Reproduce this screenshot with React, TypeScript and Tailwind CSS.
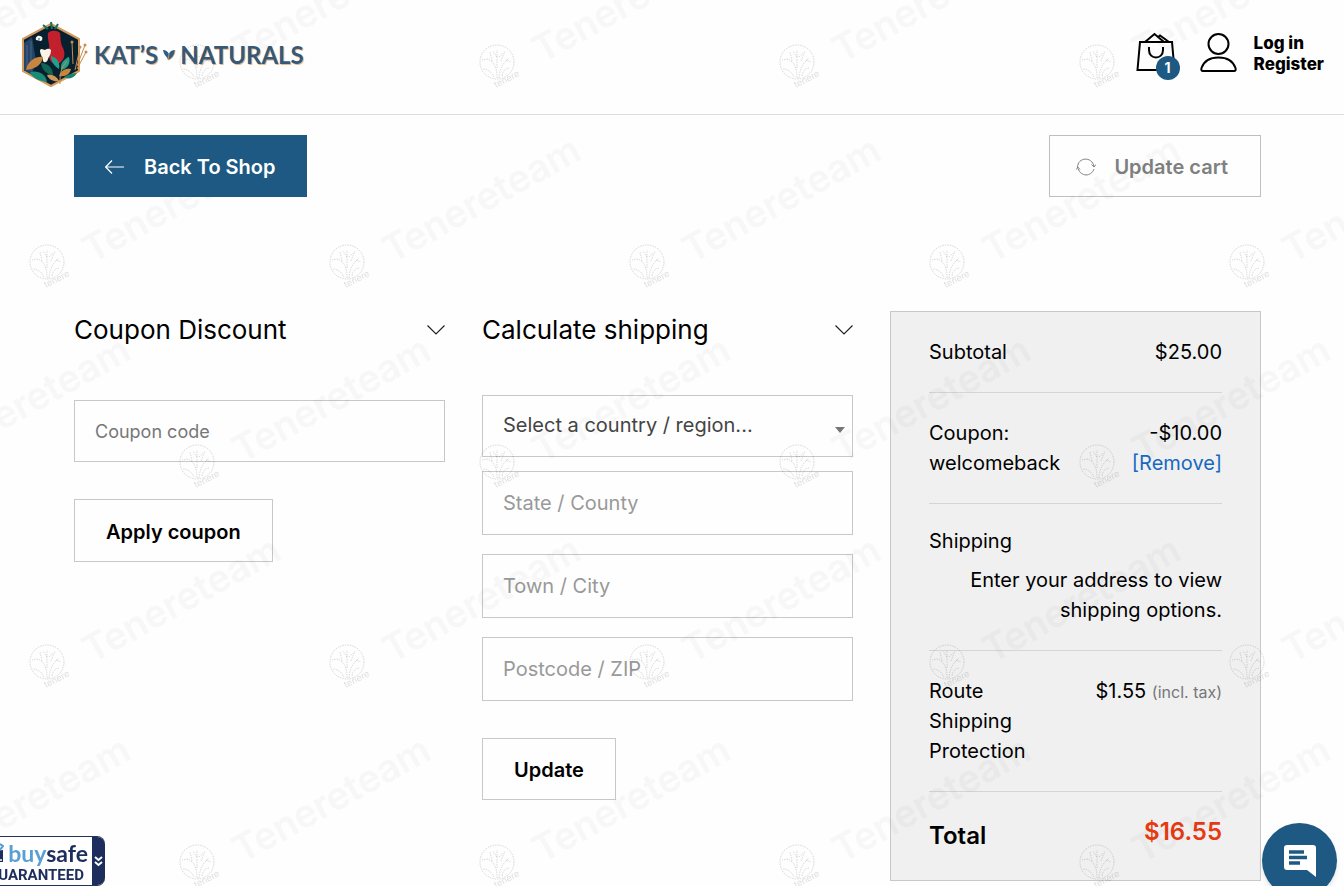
import type { ReactNode } from 'react';

const fieldClass =
  'block w-full border border-[#c8c8c8] bg-transparent px-5 outline-none placeholder:opacity-100';

function HexLogo() {
  return (
    <svg width="68" height="68" viewBox="0 0 68 68" aria-hidden="true">
      <path d="M31 3 L59 18 V50 L31 65 L3 50 V18 Z" fill="#07202f" stroke="#d39a5c" strokeWidth="2" strokeLinejoin="round" />
      <path d="M4 22 L12 16 L16 40 L12 54 L4 49 Z" fill="#254468" />
      <path d="M7 24 V48 M11 20 V50" stroke="#4a6789" strokeWidth="1" />
      <path d="M23 4 L28 8 M31 1 L32 8 M38 3 L35 8" stroke="#14705f" strokeWidth="2" />
      <path d="M28 12 C31 9 37 9 40 12 C41 18 40 21 43 27 C47 35 42 43 36 43 C30 43 28 36 29 28 C30 22 27 19 28 12 Z" fill="#c3202d" />
      <path d="M20 29 C22 27 23 29 25 29 C27 28 29 27 31 29 C31 34 29 35 28 38 C27 42 24 42 23 40 C23 36 20 34 20 29 Z" fill="#fbf4e6" />
      <path d="M16 19 C15 16 18 14 20 15 C23 15 23 19 21 20 Z" fill="#f4f6f4" />
      <circle cx="19" cy="18" r="1" fill="#7b8b8c" />
      <path d="M6 49 C8 39 17 35 23 36 C22 44 15 48 6 49 Z" fill="#c88540" />
      <path d="M10 51 C18 49 26 53 27 61 C19 60 12 57 10 51 Z" fill="#1b8b78" />
      <path d="M21 42 C28 42 33 47 33 54 C26 53 22 49 21 42 Z" fill="#0e6653" />
      <path d="M31 35 C38 37 40 42 39 48 C34 45 31 40 31 35 Z" fill="#21a08c" />
      <path d="M41 49 C40 42 44 38 49 36 C51 43 47 48 41 49 Z" fill="#21a08c" />
      <path d="M39 55 C41 49 46 47 51 48 C50 53 46 56 39 55 Z" fill="#c88540" />
      <path d="M27 54 C33 53 37 56 39 60 C34 61 29 59 27 54 Z" fill="#d19757" />
      <path d="M44 56 C49 53 54 52 57 52 C54 57 49 59 44 56 Z" fill="#17806e" />
      <path d="M40 63 C40 54 40 48 47 40 M55 49 L60 27 M57 45 L65 24 M57 48 L66 31 M53 43 L52 21" fill="none" stroke="#c88b49" strokeWidth="1" />
      <g fill="#c98d4b">
        <circle cx="60" cy="26" r="1.5" />
        <circle cx="65" cy="24" r="1.5" />
        <circle cx="66" cy="31" r="1.5" />
        <circle cx="52" cy="21" r="1.5" />
      </g>
    </svg>
  );
}

function BirdMark() {
  return (
    <svg width="14" height="12" viewBox="0 0 14 12" aria-hidden="true">
      <path d="M1 1 C4 1 6 3 7 5 C8 2 10 1 13 1 C13 6 10 10 6 11 C6 8 2 7 1 1 Z" fill="#315d80" />
      <path d="M7 5 L6 11 M13 1 C13 6 10 10 6 11" fill="none" stroke="#dba264" strokeWidth="0.8" />
    </svg>
  );
}

function BagIcon() {
  return (
    <svg width="40" height="40" viewBox="0 0 40 40" fill="none" stroke="#000" strokeWidth="2" aria-hidden="true">
      <path d="M4 10 H36 L38.500 38 H1.500 Z" />
      <path d="M9 10 L18.500 2 L28 10 M22 5 L24 3.500 L33 10" />
      <path d="M13 15 V18 C13 28 27 28 27 18 V15" />
    </svg>
  );
}

function UserIcon() {
  return (
    <svg width="38" height="40" viewBox="0 0 38 40" fill="none" stroke="#000" strokeWidth="2" aria-hidden="true">
      <circle cx="18.500" cy="12" r="10" />
      <path d="M3 39 C1.500 39 1 38 1.500 36 C4 29 10 25.500 18.500 25.500 C27 25.500 33 29 35.500 36 C36 38 35.500 39 34 39 Z" />
    </svg>
  );
}

function ChevronDown() {
  return (
    <svg width="18" height="10" viewBox="0 0 18 10" fill="none" stroke="#222" strokeWidth="1.200" aria-hidden="true">
      <path d="M0.500 0.500 L9 9 L17.500 0.500" />
    </svg>
  );
}

function SectionHeading({ children }: { children: ReactNode }) {
  return (
    <h2>
      <button type="button" className="flex w-full items-center justify-between text-left text-[26px] leading-[38px]">
        {children}
        <ChevronDown />
      </button>
    </h2>
  );
}

function Field({ name, label }: { name: string; label: string }) {
  return (
    <input
      name={name}
      type="text"
      aria-label={label}
      placeholder={label}
      className={`${fieldClass} h-16 text-xl placeholder:text-[#999]`}
    />
  );
}

// Repeating diagonal mark laid over the whole page
function Watermark() {
  const mark = (
    <>
      <g fill="none" stroke="#000" strokeOpacity="0.140" strokeWidth="1" strokeDasharray="1.500 1">
        <circle cx="27" cy="162" r="17" />
        <path d="M27 178 C27 168 25 163 18 159 M29 178 C30 166 34 163 39 158 M24 177 C21 171 17 169 13 169 M32 176 C33 170 36 168 40 168 M27 168 V150 M22 161 L20 152 M31 161 L35 151 M18 159 L12 160 M27 157 L23 151 M29 157 L33 153 M36 160 L41 162" />
      </g>
      <text transform="translate(26 188) rotate(-27)" fontFamily="Inter, sans-serif" fontSize="9" fill="#000" fillOpacity="0.130">
        tenere
      </text>
      <text transform="translate(72 164) rotate(-29)" fontFamily="Inter, sans-serif" fontWeight="600" fontSize="38" fill="#000" fillOpacity="0.027">
        Tenereteam
      </text>
    </>
  );
  return (
    <svg className="pointer-events-none absolute inset-0 z-20 h-full w-full" aria-hidden="true">
      <defs>
        <pattern id="mark-a" x="20" y="100" width="300" height="400" patternUnits="userSpaceOnUse">{mark}</pattern>
        <pattern id="mark-b" x="170" y="300" width="300" height="400" patternUnits="userSpaceOnUse">{mark}</pattern>
      </defs>
      <rect width="100%" height="100%" fill="url(#mark-a)" />
      <rect width="100%" height="100%" fill="url(#mark-b)" />
    </svg>
  );
}

function Header() {
  return (
    <header className="flex h-[115px] items-start justify-between border-b border-[#ddd] px-5">
      <a href="#home" className="mt-5 flex items-center pt-px">
        <HexLogo />
        <span className="ml-1.5 flex items-center gap-1 font-[Lato,sans-serif] text-2xl font-bold text-[#365979] [text-shadow:1px_1px_0_#e5b98c]">
          KAT’S
          <BirdMark />
          NATURALS
        </span>
      </a>
      <div className="mt-8 flex items-start">
        <a href="#cart" className="relative" aria-label="Cart">
          <BagIcon />
          <span className="absolute top-6 left-5 flex size-6 items-center justify-center rounded-full bg-[#1d5982] text-sm font-bold text-white">
            1
          </span>
        </a>
        <a href="#account" className="ml-6" aria-label="Account">
          <UserIcon />
        </a>
        <div className="ml-4 flex flex-col pt-px text-[17px] leading-[21px] font-extrabold">
          <a href="#login">Log in</a>
          <a href="#register">Register</a>
        </div>
      </div>
    </header>
  );
}

function Summary() {
  return (
    <section className="border border-[#c8c8c8] bg-[#f0f0f0] px-[38px]">
      <table className="w-full text-xl leading-[30px]">
        <tbody className="align-top">
          <tr className="border-b border-[#d5d5d5]">
            <th scope="row" className="py-[25px] text-left font-normal">Subtotal</th>
            <td className="py-[25px] text-right">$25.00</td>
          </tr>
          <tr className="border-b border-[#d5d5d5]">
            <th scope="row" className="py-[25px] text-left font-normal">Coupon: welcomeback</th>
            <td className="py-[25px] text-right">
              -$10.00 <a href="#remove" className="block text-[#1868c0]">[Remove]</a>
            </td>
          </tr>
          <tr>
            <th scope="row" colSpan={2} className="pt-[22px] text-left font-normal">Shipping</th>
          </tr>
          <tr className="border-b border-[#d5d5d5]">
            <td colSpan={2} className="pt-[9px] pb-[25px] text-right">Enter your address to view shipping options.</td>
          </tr>
          <tr className="border-b border-[#d5d5d5]">
            <th scope="row" className="py-[25px] pr-12 text-left font-normal">Route Shipping Protection</th>
            <td className="py-[25px] text-right whitespace-nowrap">
              $1.55 <small className="text-base leading-none text-[#777]">(incl. tax)</small>
            </td>
          </tr>
          <tr className="text-2xl font-semibold">
            <th scope="row" className="pt-7 pb-7 text-left font-semibold">Total</th>
            <td className="pt-6 text-right text-[#e63b11]">$16.55</td>
          </tr>
        </tbody>
      </table>
    </section>
  );
}

function BuySafeBadge() {
  return (
    <a
      href="#buysafe"
      className="fixed bottom-0 -left-4 z-30 flex h-[50px] overflow-hidden rounded-r-lg border-y border-[#22335f] bg-white text-[#1d2d5c]"
    >
      <span className="flex w-[108px] flex-col items-end pr-1">
        <span className="flex items-center gap-1 font-[Lato,sans-serif] text-[23px] leading-8 font-bold">
          <svg width="18" height="20" viewBox="0 0 18 20" aria-hidden="true">
            <path d="M1 6 C4 0 14 0 17 3 C15 7 11 7 8 6" fill="none" stroke="#5a9fd4" strokeWidth="2" />
            <path d="M2 9 L17 7 V19 H3 Z" fill="#1d2d5c" />
            <path d="M10 17 H12 M14 17 H16" stroke="#fff" strokeWidth="1.500" />
          </svg>
          <span>
            <span className="text-[#5a9fd4]">buy</span>safe
          </span>
        </span>
        <span className="pr-1 font-[Roboto,sans-serif] text-[15px] leading-3 font-bold">GUARANTEED</span>
      </span>
      <span className="flex w-[13px] items-center justify-center bg-[#1d2d5c]">
        <svg width="9" height="11" viewBox="0 0 9 11" fill="none" stroke="#fff" strokeWidth="2" aria-hidden="true">
          <path d="M1 1 L4.500 4 L8 1 M1 6 L4.500 9 L8 6" />
        </svg>
      </span>
    </a>
  );
}

export default function App() {
  return (
    <div className="relative min-h-screen overflow-hidden bg-[#fefefe] font-[Inter,sans-serif] text-black">
      <Header />
      <main className="pt-5 pr-[83px] pb-1 pl-[74px]">
        <div className="flex items-center justify-between">
          <a href="#shop" className="relative z-30 flex h-[62px] items-center gap-5 bg-[#1d5982] px-[31px] pt-0.5 text-xl font-semibold text-white">
            <svg width="19" height="14" viewBox="0 0 19 14" fill="none" stroke="currentColor" strokeWidth="1.200" aria-hidden="true">
              <path d="M19 7 H1 M7 0.500 L0.700 7 L7 13.500" />
            </svg>
            Back To Shop
          </a>
          <button type="button" className="flex h-[62px] items-center gap-[18px] border border-[#bfbfbf] pt-0.5 pr-8 pl-[26px] text-xl font-semibold text-[#808080]">
            <svg width="20" height="18" viewBox="0 0 20 18" fill="none" stroke="currentColor" aria-hidden="true">
              <path d="M1.500 9.500 C1.500 -1 16 -2 18 8.500 M15.500 6.500 L18 9 L20 6.500 M18 11 C15 19 5 19 2 10.500 M0.500 11.500 L1.800 9 L4 11.500" />
            </svg>
            Update cart
          </button>
        </div>

        <div className="mt-[114px] grid grid-cols-3 items-start gap-[37px]">
          <form onSubmit={(e) => e.preventDefault()}>
            <SectionHeading>Coupon Discount</SectionHeading>
            <input
              name="coupon"
              type="text"
              aria-label="Coupon code"
              placeholder="Coupon code"
              className={`${fieldClass} mt-[51px] h-[62px] text-lg placeholder:text-[#777]`}
            />
            <button type="submit" className="mt-[37px] h-[63px] border border-[#c8c8c8] px-[31px] pt-0.5 text-xl font-semibold">
              Apply coupon
            </button>
          </form>

          <form onSubmit={(e) => e.preventDefault()}>
            <SectionHeading>Calculate shipping</SectionHeading>
            <div className="relative mt-[46px]">
              <select name="country" aria-label="Country / region" className={`${fieldClass} h-[62px] appearance-none pb-0.5 text-xl text-[#444]`}>
                <option>Select a country / region...</option>
              </select>
              <svg className="pointer-events-none absolute top-8 right-2" width="10" height="6" viewBox="0 0 10 6" aria-hidden="true">
                <path d="M0 0 H10 L5 6 Z" fill="#777" />
              </svg>
            </div>
            <div className="mt-3.5 space-y-[19px]">
              <Field name="state" label="State / County" />
              <Field name="city" label="Town / City" />
              <Field name="postcode" label="Postcode / ZIP" />
            </div>
            <button type="submit" className="mt-[37px] h-[62px] border border-[#c8c8c8] px-[31px] pt-0.5 text-xl font-semibold">
              Update
            </button>
          </form>

          <Summary />
        </div>
      </main>

      <BuySafeBadge />
      <button
        type="button"
        aria-label="Open chat"
        className="fixed right-[7px] -bottom-3 z-30 flex size-[75px] items-center justify-center rounded-full bg-[#1d5982] shadow-md"
      >
        <svg width="32" height="32" viewBox="0 0 32 32" aria-hidden="true">
          <path d="M3 0 H29 Q32 0 32 3 V32 L23 25 H3 Q0 25 0 22 V3 Q0 0 3 0 Z" fill="#fff" />
          <path d="M5 7 H20 M5 12.500 H23 M5 18 H16" stroke="#1d5982" strokeWidth="3.500" />
        </svg>
      </button>
      <Watermark />
    </div>
  );
}
